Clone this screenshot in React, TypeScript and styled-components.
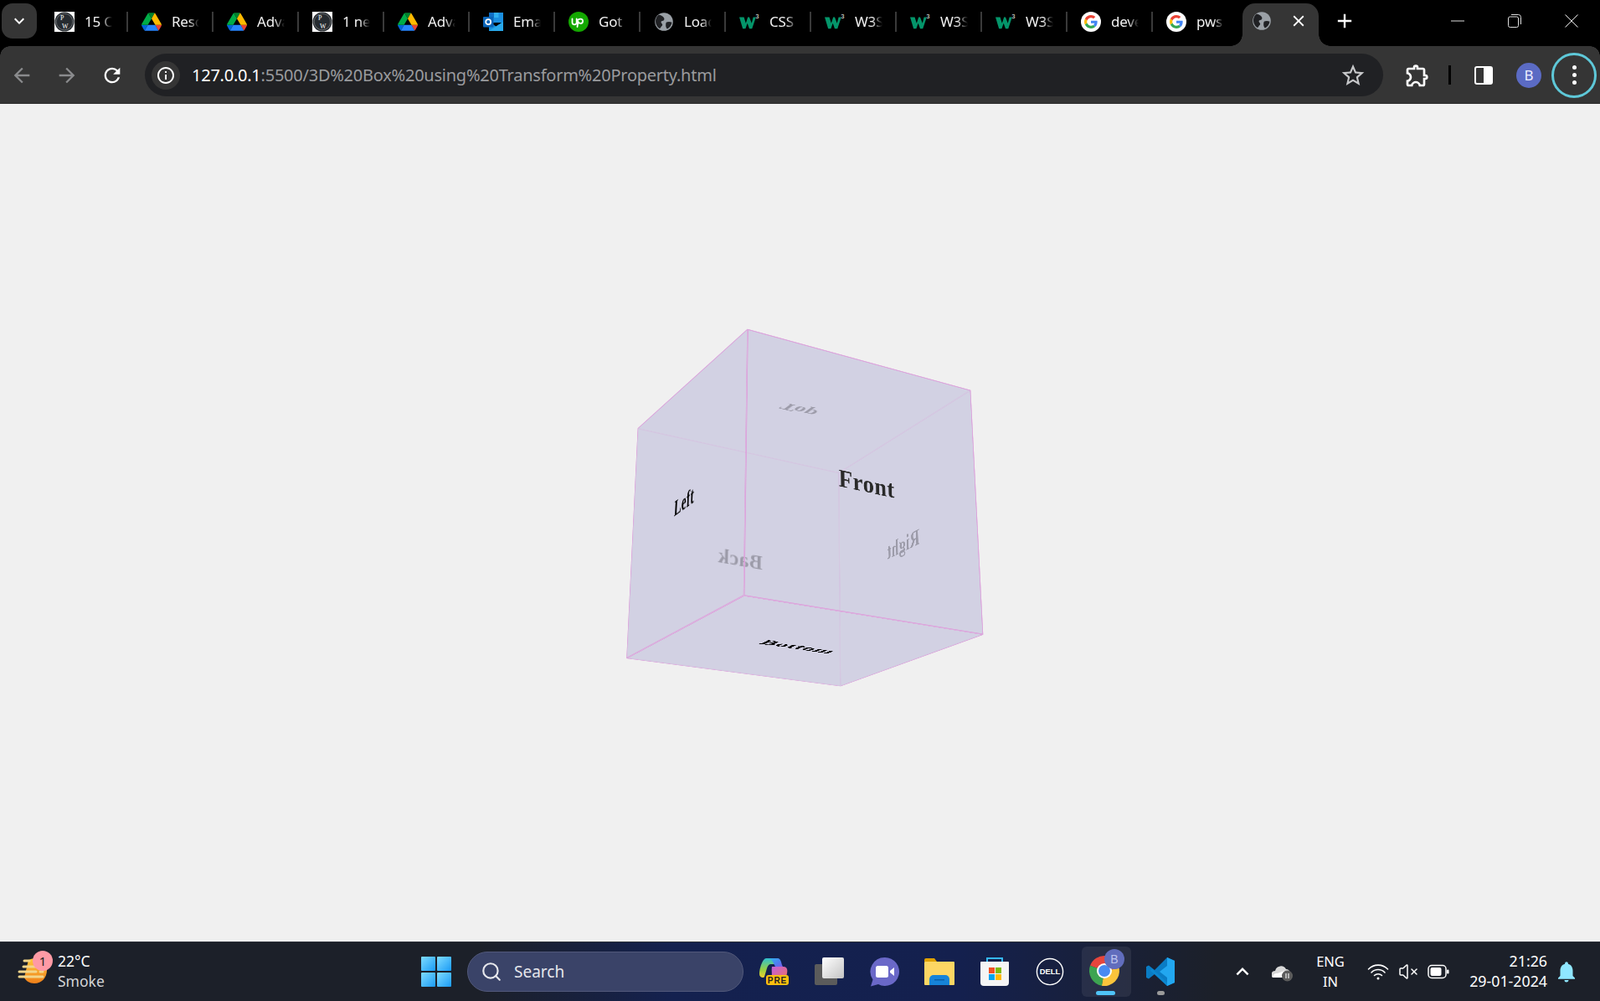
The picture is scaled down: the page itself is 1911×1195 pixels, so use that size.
import React from "react";
import styled, { createGlobalStyle } from "styled-components";
import {
  MdArrowBack,
  MdArrowForward,
  MdRefresh,
  MdInfoOutline,
  MdStarBorder,
  MdOutlineExtension,
  MdNotifications,
  MdClose,
  MdAdd,
  MdKeyboardArrowDown,
  MdKeyboardArrowUp,
} from "react-icons/md";
import { VolumeX, Search as SearchGlyph } from "lucide-react";

const UI_FONT = `"Noto Sans", "Open Sans", "Liberation Sans", sans-serif`;

const GlobalStyle = createGlobalStyle`
  html, body {
    margin: 0;
    padding: 0;
    height: 100%;
    background: #f0f0f0;
    font-family: ${UI_FONT};
    overflow: hidden;
  }
  #root {
    height: 100%;
  }
`;

const Screen = styled.div`
  display: flex;
  flex-direction: column;
  width: 1911px;
  height: 1195px;
  overflow: hidden;
`;

/* ---------- tab strip ---------- */

const TabStrip = styled.div`
  display: flex;
  align-items: flex-start;
  height: 55px;
  flex: none;
  background: #000;
  color: #fff;
`;

const TabSearch = styled.div`
  display: flex;
  align-items: center;
  justify-content: center;
  width: 42px;
  height: 42px;
  margin: 4px 4px 0 2px;
  border-radius: 13px;
  background: #353535;
  font-size: 24px;
`;

const Tab = styled.div<{ $first?: boolean; $last?: boolean }>`
  display: flex;
  align-items: center;
  position: relative;
  width: ${(p) => (p.$first ? 104 : 102)}px;
  height: 51px;
  box-sizing: border-box;
  padding-left: 17px;
  flex: none;

  &::after {
    content: "";
    display: ${(p) => (p.$last ? "none" : "block")};
    position: absolute;
    right: -1px;
    top: 14px;
    width: 2px;
    height: 24px;
    background: #3a3a3a;
  }
`;

const Favicon = styled.span`
  display: flex;
  width: 24px;
  height: 24px;
  flex: none;
  svg {
    display: block;
  }
`;

const TabTitle = styled.span`
  width: 33px;
  margin-left: 12px;
  white-space: nowrap;
  font-size: 17px;
  letter-spacing: -0.2px;
  color: #f1f1f1;
  -webkit-mask-image: linear-gradient(90deg, #000 62%, transparent 100%);
  mask-image: linear-gradient(90deg, #000 62%, transparent 100%);
`;

const ActiveTab = styled.div`
  display: flex;
  align-items: center;
  position: relative;
  flex: none;
  width: 91px;
  height: 51px;
  margin: 4px 5px 0 6px;
  box-sizing: border-box;
  padding: 0 0 9px 11px;
  background: #353535;
  border-radius: 15px 15px 0 0;

  &::before,
  &::after {
    content: "";
    position: absolute;
    bottom: 0;
    width: 14px;
    height: 14px;
  }
  &::before {
    left: -14px;
    background: radial-gradient(circle at 0 0, transparent 13.5px, #353535 14px);
  }
  &::after {
    right: -14px;
    background: radial-gradient(circle at 100% 0, transparent 13.5px, #353535 14px);
  }
`;

const TabClose = styled.span`
  display: flex;
  margin-left: 21px;
  font-size: 22px;
  color: #fff;
`;

const NewTab = styled.div`
  display: flex;
  align-items: center;
  justify-content: center;
  width: 28px;
  height: 50px;
  margin-left: 12px;
  font-size: 28px;
`;

const WindowControls = styled.div`
  display: flex;
  margin-left: auto;
`;

const WindowButton = styled.div`
  display: flex;
  align-items: center;
  justify-content: center;
  width: 68px;
  height: 50px;
`;

/* ---------- toolbar ---------- */

const Toolbar = styled.div`
  display: flex;
  align-items: center;
  height: 69px;
  flex: none;
  box-sizing: border-box;
  padding: 1px 0 0 4px;
  background: #353535;
  color: #fff;
  border-bottom: 1px solid #2c2c2c;
  position: relative;
`;

const Corner = styled.div<{ $side: "left" | "right" }>`
  position: absolute;
  top: 0;
  ${(p) => p.$side}: 0;
  width: 12px;
  height: 12px;
  background: ${(p) =>
    p.$side === "right"
      ? "radial-gradient(circle at 0 100%, transparent 11.5px, #000 12px)"
      : "radial-gradient(circle at 100% 100%, transparent 11.5px, #000 12px)"};
`;

const NavGroup = styled.div`
  display: flex;
  gap: 10px;
  flex: none;
`;

const NavButton = styled.div<{ $dim?: boolean }>`
  display: flex;
  align-items: center;
  justify-content: center;
  width: 44px;
  height: 44px;
  font-size: 28px;
  color: ${(p) => (p.$dim ? "#8a8b8d" : "#fff")};
`;

const Omnibox = styled.div`
  display: flex;
  align-items: center;
  width: 1479px;
  height: 51px;
  margin-left: 17px;
  border-radius: 26px;
  background: #202124;
`;

const InfoChip = styled.div`
  display: flex;
  align-items: center;
  justify-content: center;
  width: 34px;
  height: 34px;
  margin-left: 8px;
  border-radius: 50%;
  background: #353535;
  font-size: 24px;
`;

const Url = styled.div`
  margin-left: 14px;
  font-size: 20px;
  letter-spacing: -0.24px;
  white-space: nowrap;
  color: #9a9b9e;

  b {
    font-weight: 400;
    color: #fff;
  }
`;

const StarSlot = styled.div`
  display: flex;
  margin-left: auto;
  margin-right: 20px;
  font-size: 32px;
  color: #c7c8ca;
`;

const ToolSlot = styled.div<{ $left: number; $width: number }>`
  display: flex;
  align-items: center;
  justify-content: center;
  flex: none;
  width: ${(p) => p.$width}px;
  margin-left: ${(p) => p.$left}px;
  font-size: 32px;
`;

const ToolDivider = styled.div`
  width: 3px;
  height: 23px;
  margin-left: 10px;
  background: #000;
`;

const Avatar = styled.div`
  display: flex;
  align-items: center;
  justify-content: center;
  width: 30px;
  height: 30px;
  margin-left: 17px;
  border-radius: 50%;
  background: #5b6bc4;
  font-size: 17px;
  color: #eef;
`;

const MenuRing = styled.div`
  display: flex;
  flex-direction: column;
  align-items: center;
  justify-content: center;
  gap: 4px;
  width: 54px;
  height: 54px;
  box-sizing: border-box;
  margin-left: 12px;
  border: 3px solid #5ec8d8;
  border-radius: 50%;
`;

const MenuDot = styled.i`
  width: 5px;
  height: 5px;
  border-radius: 50%;
  background: #fff;
`;

/* ---------- page with the cube ---------- */

const Page = styled.main`
  position: relative;
  flex: 1;
  background: #f0f0f0;
`;

const Face = styled.div<{ $ink: string }>`
  position: absolute;
  left: 0;
  top: 0;
  display: flex;
  align-items: center;
  justify-content: center;
  width: 250px;
  height: 250px;
  box-sizing: border-box;
  border: 1px solid #dba6dc;
  background: rgba(208, 207, 225, 0.75);
  font-family: "Liberation Serif", "Times New Roman", serif;
  font-size: 24px;
  font-weight: 700;
  letter-spacing: 0.5px;
  color: ${(p) => p.$ink};
  transform-origin: 0 0;
`;

type Pt = [number, number];

const OFFSET_Y = 124;
const FACE_SIZE = 250;

const A: Pt = [892.7, 392.7];
const B: Pt = [1159.3, 465.7];
const C: Pt = [761.7, 511.3];
const D: Pt = [1002, 564.3];
const E: Pt = [748.3, 786];
const F: Pt = [1004, 819.3];
const G: Pt = [1174.3, 757.7];
const H: Pt = [888.3, 711.3];

// square -> quad, corners given as top-left, top-right, bottom-right, bottom-left
const quadMatrix = (corners: Pt[]) => {
  const [[x0, y0], [x1, y1], [x2, y2], [x3, y3]] = corners.map(
    ([x, y]): Pt => [x, y - OFFSET_Y]
  );
  const dx1 = x1 - x2;
  const dx2 = x3 - x2;
  const dx3 = x0 - x1 + x2 - x3;
  const dy1 = y1 - y2;
  const dy2 = y3 - y2;
  const dy3 = y0 - y1 + y2 - y3;
  const den = dx1 * dy2 - dx2 * dy1;
  const g = (dx3 * dy2 - dx2 * dy3) / den;
  const h = (dx1 * dy3 - dx3 * dy1) / den;
  const a = x1 - x0 + g * x1;
  const b = x3 - x0 + h * x3;
  const d = y1 - y0 + g * y1;
  const e = y3 - y0 + h * y3;
  const s = FACE_SIZE;
  return `matrix3d(${[a / s, d / s, 0, g / s, b / s, e / s, 0, h / s, 0, 0, 1, 0, x0, y0, 0, 1].join(",")})`;
};

// painted back to front, as the faces stack in the picture
const faces: { label: string; ink: string; corners: Pt[] }[] = [
  { label: "Back", ink: "#000", corners: [D, C, E, F] },
  { label: "Right", ink: "#000", corners: [B, D, F, G] },
  { label: "Top", ink: "#000", corners: [C, D, B, A] },
  { label: "Left", ink: "#000", corners: [C, A, H, E] },
  { label: "Bottom", ink: "#000", corners: [H, G, F, E] },
  { label: "Front", ink: "#2a2a2a", corners: [A, B, G, H] },
];

/* ---------- taskbar ---------- */

const Taskbar = styled.footer`
  display: flex;
  align-items: center;
  height: 71px;
  flex: none;
  box-sizing: border-box;
  border-top: 1px solid #2b2f38;
  background: linear-gradient(
    90deg,
    #1c2029 0%,
    #1c2029 30%,
    #14214f 42%,
    #14204e 60%,
    #1c2029 76%,
    #1c2029 100%
  );
  color: #fff;
`;

const Weather = styled.div`
  display: flex;
  align-items: center;
  position: relative;
  width: 503px;
  flex: none;
  box-sizing: border-box;
  padding-left: 21px;
`;

const WeatherBadge = styled.span`
  position: absolute;
  left: 39px;
  top: -2px;
  display: flex;
  align-items: center;
  justify-content: center;
  width: 24px;
  height: 24px;
  border-radius: 50%;
  background: #ff9aa5;
  color: #222;
  font-size: 15px;
`;

const WeatherText = styled.div`
  margin-left: 12px;
  margin-top: -2px;
  font-size: 17.5px;
  line-height: 24px;

  small {
    display: block;
    font-size: 17.5px;
    color: #d4d5d8;
  }
`;

const WinLogo = styled.div`
  display: grid;
  grid-template-columns: 17px 17px;
  grid-template-rows: 17px 17px;
  gap: 1.5px;
  flex: none;
  width: 36px;
`;

const WinPane = styled.i`
  background: linear-gradient(135deg, #7fdcff, #1a9bf5);
  border-radius: 1px;
`;

const SearchPill = styled.div`
  display: flex;
  align-items: center;
  flex: none;
  width: 330px;
  height: 48px;
  box-sizing: border-box;
  margin-left: 19px;
  padding-left: 15px;
  border: 1px solid #51587a;
  border-radius: 24px;
  background: #3a4368;
  color: #e6e7ec;
  font-size: 19px;

  span {
    margin-left: 14px;
  }
`;

const Dock = styled.div`
  display: flex;
  flex: none;
  margin-left: 3px;
`;

const DockSlot = styled.div<{ $active?: boolean }>`
  display: flex;
  align-items: center;
  justify-content: center;
  position: relative;
  width: 66px;
  height: 60px;
  flex: none;

  ${(p) =>
    p.$active &&
    `
    &::before {
      content: "";
      position: absolute;
      left: 5px;
      right: 2px;
      top: 0;
      bottom: 0;
      border-radius: 6px;
      background: rgba(255, 255, 255, 0.07);
    }
  `}
`;

const DockMark = styled.i<{ $width: number; $color: string }>`
  position: absolute;
  bottom: 2px;
  left: 50%;
  width: ${(p) => p.$width}px;
  height: 5px;
  margin-left: ${(p) => -p.$width / 2}px;
  border-radius: 3px;
  background: ${(p) => p.$color};
`;

const Tray = styled.div`
  display: flex;
  align-items: center;
  margin-left: 41px;
`;

const TraySlot = styled.div<{ $width: number }>`
  display: flex;
  align-items: center;
  justify-content: center;
  flex: none;
  width: ${(p) => p.$width}px;
  font-size: 30px;
`;

const Lang = styled.div`
  text-align: center;
  font-size: 16.5px;
  line-height: 24px;
`;

const Clock = styled.div`
  width: 106px;
  flex: none;
  margin-top: -2px;
  text-align: right;
  font-size: 17.8px;
  line-height: 24px;
  white-space: nowrap;
`;

/* ---------- icons ---------- */

const PwIcon = () => (
  <svg viewBox="0 0 24 24" width="24" height="24">
    <rect width="24" height="24" fill="#fff" />
    <circle cx="12" cy="12" r="11.5" fill="#262b30" />
    <circle cx="12" cy="12" r="9.8" fill="none" stroke="#aaa" strokeWidth=".5" />
    <text x="7" y="10" fontSize="8" fontFamily="Liberation Serif" fill="#fff">P</text>
    <text x="9" y="20" fontSize="8" fontFamily="Liberation Serif" fill="#fff">W</text>
  </svg>
);

const DriveIcon = () => (
  <svg viewBox="0 0 87.3 78" width="24" height="24">
    <path d="m6.6 66.85 3.85 6.65c.8 1.4 1.95 2.5 3.3 3.3l13.75-23.8h-27.5c0 1.55.4 3.1 1.2 4.5z" fill="#0066da" />
    <path d="m43.65 25-13.75-23.8c-1.35.8-2.5 1.9-3.3 3.3l-25.4 44a9.06 9.06 0 0 0 -1.2 4.5h27.5z" fill="#00ac47" />
    <path d="m73.55 76.8c1.35-.8 2.5-1.9 3.3-3.3l1.6-2.75 7.65-13.25c.8-1.4 1.2-2.95 1.2-4.5h-27.502l5.852 11.5z" fill="#ea4335" />
    <path d="m43.65 25 13.75-23.8c-1.35-.8-2.9-1.2-4.5-1.2h-18.5c-1.6 0-3.15.45-4.5 1.2z" fill="#00832d" />
    <path d="m59.8 53h-32.3l-13.75 23.8c1.35.8 2.9 1.2 4.5 1.2h50.8c1.6 0 3.15-.45 4.5-1.2z" fill="#2684fc" />
    <path d="m73.4 26.5-12.7-22c-.8-1.4-1.95-2.5-3.3-3.3l-13.75 23.8 16.15 28h27.45c0-1.55-.4-3.1-1.2-4.5z" fill="#ffba00" />
  </svg>
);

const OutlookIcon = () => (
  <svg viewBox="0 0 24 24" width="24" height="24">
    <rect x="7" y="1" width="17" height="12" fill="#1a8fe0" />
    <rect x="12.5" y="1" width="6" height="6" fill="#30b0f0" />
    <rect x="7" y="1" width="6" height="6" fill="#0f6fc6" />
    <path d="M7 12l8.5 5.5L24 12v11H7z" fill="#1490df" />
    <path d="M7 23l17-11v11z" fill="#28a8ea" />
    <rect x="0" y="6" width="12.5" height="12.5" rx="1" fill="#0a64b8" />
    <circle cx="6.2" cy="12.2" r="3" fill="none" stroke="#fff" strokeWidth="1.7" />
  </svg>
);

const UpworkIcon = () => (
  <svg viewBox="0 0 24 24" width="24" height="24">
    <circle cx="12" cy="12" r="12" fill="#14a800" />
    <path
      d="M4.5 8.500v4.200a2.600 2.600 0 0 0 5.200 0V8.500M9.800 12.400c.5-2.400 2.300-3.800 4.600-3.800a2.700 2.700 0 0 1 0 5.400c-1.300 0-2.300-.8-2.900-2l-1 6"
      fill="none"
      stroke="#fff"
      strokeWidth="1.800"
      strokeLinecap="round"
    />
  </svg>
);

const GlobeIcon = () => (
  <svg viewBox="0 0 24 24" width="24" height="24">
    <circle cx="12" cy="12" r="10.8" fill="#9aa0a6" />
    <path d="M5.5 3.800c3 .2 5.500 1.600 6.600 3.600 1 1.900-.4 3.300-2.300 3.600-1.700.3-1.500 2.300-.3 3.200 1.300 1 .5 2.800-.6 3.400-.8 1.500-1.300 2.400-2 2.500-3.500-2-5.200-6-4.800-10 .3-2.500 1.600-4.700 3.400-6.300z" fill="#202124" />
    <path d="M15 12.500c2-.9 4.800-.7 6.500.3-.5 3.500-2.700 6.300-5.600 7.800-1.300-1.500-1.900-3.300-1.700-4.800.1-1.300 0-2.600.8-3.300z" fill="#202124" />
  </svg>
);

const W3Icon = () => (
  <svg viewBox="0 0 26 24" width="24" height="24">
    <path d="M0 6h6l2.500 8 2.500-8h2l3 8 2-8h3.500l-5 15h-3.500l-2.500-7-2.500 7h-3.500z" fill="#04956a" />
    <text x="21" y="8" fontSize="7.500" fill="#fff" fontFamily="Liberation Sans">3</text>
  </svg>
);

const GoogleIcon = () => (
  <svg viewBox="0 0 24 24" width="24" height="24">
    <circle cx="12" cy="12" r="12" fill="#fff" />
    <g transform="translate(4 4) scale(.3333)">
      <path fill="#EA4335" d="M24 9.5c3.54 0 6.71 1.22 9.21 3.6l6.85-6.85C35.9 2.38 30.47 0 24 0 14.62 0 6.51 5.38 2.56 13.22l7.98 6.19C12.43 13.72 17.74 9.5 24 9.5z" />
      <path fill="#4285F4" d="M46.98 24.55c0-1.57-.15-3.09-.38-4.55H24v9.02h12.94c-.58 2.96-2.26 5.48-4.78 7.18l7.73 6c4.51-4.18 7.09-10.36 7.09-17.65z" />
      <path fill="#FBBC05" d="M10.53 28.59c-.48-1.45-.76-2.99-.76-4.59s.27-3.14.76-4.59l-7.98-6.19C.92 16.46 0 20.12 0 24c0 3.88.92 7.54 2.56 10.78l7.97-6.19z" />
      <path fill="#34A853" d="M24 48c6.48 0 11.93-2.13 15.89-5.81l-7.73-6c-2.15 1.45-4.92 2.3-8.16 2.3-6.26 0-11.57-4.22-13.47-9.91l-7.98 6.19C6.51 42.62 14.62 48 24 48z" />
    </g>
  </svg>
);

const icons: Record<string, () => React.JSX.Element> = {
  pw: PwIcon,
  drive: DriveIcon,
  outlook: OutlookIcon,
  upwork: UpworkIcon,
  globe: GlobeIcon,
  w3: W3Icon,
  google: GoogleIcon,
};

const tabs = [
  { icon: "pw", title: "15 C" },
  { icon: "drive", title: "Resc" },
  { icon: "drive", title: "Adva" },
  { icon: "pw", title: "1 ne" },
  { icon: "drive", title: "Adva" },
  { icon: "outlook", title: "Ema" },
  { icon: "upwork", title: "Got" },
  { icon: "globe", title: "Load" },
  { icon: "w3", title: "CSS" },
  { icon: "w3", title: "W3S" },
  { icon: "w3", title: "W3S" },
  { icon: "w3", title: "W3S" },
  { icon: "google", title: "deve" },
  { icon: "google", title: "pws" },
];

const SidePanelIcon = () => (
  <svg viewBox="0 0 22 22" width="22" height="22">
    <rect x="1" y="1" width="20" height="20" rx="2" fill="none" stroke="#fff" strokeWidth="2" />
    <rect x="11" y="1" width="10" height="20" rx="1" fill="#fff" />
  </svg>
);

const WeatherIcon = () => (
  <svg viewBox="0 0 36 36" width="36" height="36">
    <path d="M13 4a15 15 0 0 1 22 12c0 9-6 16-15 16-6 0-10-3-12-7z" fill="url(#sun)" />
    <defs>
      <linearGradient id="sun" x1="0" y1="0" x2="0" y2="1">
        <stop offset="0" stopColor="#ffc83d" />
        <stop offset="1" stopColor="#f0801a" />
      </linearGradient>
    </defs>
    <g stroke="#f2d58a" strokeWidth="3" strokeLinecap="round">
      <path d="M8 5h6M7 12h14M2 18h20M27 18h3M2 24h28" />
    </g>
  </svg>
);

const CopilotIcon = () => (
  <svg viewBox="0 0 36 36" width="36" height="36">
    <defs>
      <linearGradient id="cpA" x1="0" y1="0" x2="1" y2="1">
        <stop offset="0" stopColor="#2fb5f0" />
        <stop offset=".6" stopColor="#4f7df0" />
        <stop offset="1" stopColor="#7b5ce8" />
      </linearGradient>
      <linearGradient id="cpB" x1="0" y1="0" x2="0" y2="1">
        <stop offset="0" stopColor="#2fc0d0" />
        <stop offset=".6" stopColor="#9ad040" />
        <stop offset="1" stopColor="#f0d030" />
      </linearGradient>
      <linearGradient id="cpC" x1="0" y1="0" x2="1" y2="1">
        <stop offset="0" stopColor="#c060e0" />
        <stop offset="1" stopColor="#f07060" />
      </linearGradient>
    </defs>
    <path d="M9 2h12c4 0 5 3 6 7H15c-3 0-4 2-5 5L7 24c-1 2-6 1-6-3C1 14 5 2 9 2z" fill="url(#cpB)" />
    <path d="M12 2h11c3 0 4 4 5 8l1 2h-9c-3-6-4-9-8-10z" fill="url(#cpA)" />
    <path d="M16 12h14c4 0 5 4 4 8-1 5-3 8-7 8H15c2-4 0-12 1-16z" fill="url(#cpC)" />
    <rect x="9" y="22" width="27" height="12" rx="3" fill="#fbbf0e" />
    <text x="22.5" y="32" textAnchor="middle" fontSize="10" fontWeight="700" fill="#222" fontFamily="Liberation Sans" letterSpacing="1">PRE</text>
  </svg>
);

const TaskViewIcon = () => (
  <svg viewBox="0 0 36 36" width="36" height="36">
    <rect x="1" y="9" width="27" height="25" rx="2" fill="#5b5b5b" />
    <rect x="10" y="1" width="26" height="25" rx="2" fill="url(#tv)" />
    <defs>
      <linearGradient id="tv" x1="0" y1="0" x2="1" y2="1">
        <stop offset="0" stopColor="#ffffff" />
        <stop offset="1" stopColor="#c4c4c4" />
      </linearGradient>
    </defs>
  </svg>
);

const MeetIcon = () => (
  <svg viewBox="0 0 36 36" width="36" height="36">
    <path d="M19 1a17 17 0 1 1-8 32L2 35.500l2.500-8A17 17 0 0 1 19 1z" fill="#6a68c8" />
    <rect x="8" y="11" width="15" height="14" rx="2.500" fill="#fff" />
    <path d="M25 17l5-4v10l-5-4z" fill="#fff" />
  </svg>
);

const FolderIcon = () => (
  <svg viewBox="0 0 36 32" width="36" height="32">
    <path d="M0 2a2 2 0 0 1 2-2h10l3 4h-15z" fill="#e0a100" />
    <rect x="0" y="4" width="36" height="28" rx="1" fill="#fdd663" />
    <path d="M6 32v-7a5 5 0 0 1 5-5h14a5 5 0 0 1 5 5v7z" fill="#1683d8" />
    <rect x="12" y="25" width="12" height="1.500" fill="#0a5fa8" />
  </svg>
);

const StoreIcon = () => (
  <svg viewBox="0 0 36 36" width="36" height="36">
    <path d="M9 7V2h18v5" fill="none" stroke="#35b8f0" strokeWidth="2" />
    <path d="M2 6h32a1 1 0 0 1 1 1v24a4 4 0 0 1-4 4H5a4 4 0 0 1-4-4V7a1 1 0 0 1 1-1z" fill="#f5f5f5" />
    <rect x="11" y="13" width="7" height="7" fill="#f25022" />
    <rect x="19" y="13" width="7" height="7" fill="#7fba00" />
    <rect x="11" y="21" width="7" height="7" fill="#00a4ef" />
    <rect x="19" y="21" width="7" height="7" fill="#ffb900" />
  </svg>
);

const DellIcon = () => (
  <svg viewBox="0 0 36 36" width="34" height="34">
    <circle cx="18" cy="18" r="16.500" fill="none" stroke="#fff" strokeWidth="1.500" />
    <text x="18" y="21.500" textAnchor="middle" fontSize="10" fontWeight="700" fill="#fff" fontFamily="Liberation Sans">DELL</text>
  </svg>
);

const sector = (from: number, to: number, r = 18, c = 18) => {
  const p = (deg: number) => {
    const t = (deg * Math.PI) / 180;
    return `${c + r * Math.cos(t)} ${c + r * Math.sin(t)}`;
  };
  return `M${c} ${c}L${p(from)}A${r} ${r} 0 0 1 ${p(to)}Z`;
};

const ChromeIcon = () => (
  <svg viewBox="0 0 46 56" width="46" height="56">
    <g transform="translate(4 9)">
      <path d={sector(-160, -10)} fill="#e5392f" />
      <path d={sector(-10, 100)} fill="#fbc02d" />
      <path d={sector(100, 200)} fill="#2f9e44" />
      <circle cx="18" cy="18" r="9" fill="#fff" />
      <circle cx="18" cy="18" r="7" fill="#3b82f0" />
    </g>
    <circle cx="34" cy="13" r="12" fill="#5562b8" />
    <text x="34" y="18" textAnchor="middle" fontSize="14" fill="#b9c0ee" fontFamily="Liberation Sans">B</text>
  </svg>
);

const VsCodeIcon = () => (
  <svg viewBox="0 0 36 36" width="36" height="36">
    <path d="M26 1l9 4v26l-9 4-15-14-7 5.500-3-1.500v-13l3-1.500 7 5.500z" fill="#0a7cc4" />
    <path d="M26 1l9 4v26l-9 4V25l-9-7 9-7z" fill="#22a7f0" />
    <path d="M4 11l22 20v4l-22-20z" fill="#0e8fd8" opacity=".6" />
    <path d="M1 12.500l3-1.500 4 3.500-4 3.500-3 1z" fill="#0a7cc4" />
  </svg>
);

const CloudIcon = () => (
  <svg viewBox="0 0 26 24" width="26" height="24">
    <path d="M1 19a4.500 4.500 0 0 1 3-8 7 7 0 0 1 13-2 5 5 0 0 1 5 5v5z" fill="#d8d8d8" />
    <path d="M1 19a5 5 0 0 1 6-5l8-3 3 8z" fill="#fff" />
    <circle cx="18.500" cy="17" r="6.500" fill="#5c5c5c" />
    <path d="M17 14v6M20 14v6" stroke="#eee" strokeWidth="1.200" />
  </svg>
);

const WifiIcon = () => (
  <svg viewBox="0 0 26 20" width="26" height="20" fill="none" stroke="#fff" strokeWidth="1.600" strokeLinecap="round">
    <path d="M1.500 7a16 16 0 0 1 23 0M5 11a11 11 0 0 1 16 0M8.500 14.500a6.500 6.500 0 0 1 9 0" />
    <circle cx="13" cy="18" r="1.500" fill="#fff" stroke="none" />
  </svg>
);

const BatteryIcon = () => (
  <svg viewBox="0 0 26 18" width="26" height="18">
    <rect x="1" y="1.500" width="21" height="15" rx="4" fill="none" stroke="#fff" strokeWidth="1.500" />
    <rect x="3.500" y="4" width="13" height="10" rx="2" fill="#fff" />
    <rect x="23" y="6.500" width="2.500" height="5" rx="1.200" fill="#fff" />
  </svg>
);

const App = () => (
  <Screen>
    <GlobalStyle />
    <TabStrip>
      <TabSearch>
        <MdKeyboardArrowDown />
      </TabSearch>
      {tabs.map((tab, i) => {
        const Icon = icons[tab.icon];
        return (
          <Tab key={i} $first={i === 0} $last={i === tabs.length - 1}>
            <Favicon>
              <Icon />
            </Favicon>
            <TabTitle>{tab.title}</TabTitle>
          </Tab>
        );
      })}
      <ActiveTab>
        <Favicon>
          <GlobeIcon />
        </Favicon>
        <TabClose>
          <MdClose />
        </TabClose>
      </ActiveTab>
      <NewTab>
        <MdAdd />
      </NewTab>
      <WindowControls>
        <WindowButton>
          <svg width="16" height="16" viewBox="0 0 16 16">
            <path d="M0 8h16" stroke="#ddd" strokeWidth="1" />
          </svg>
        </WindowButton>
        <WindowButton>
          <svg width="16" height="16" viewBox="0 0 16 16" fill="none" stroke="#ddd" strokeWidth="1">
            <rect x=".5" y="3" width="12" height="12.500" rx="2" />
            <path d="M4 .5h8.500a3 3 0 0 1 3 3v8.500" />
          </svg>
        </WindowButton>
        <WindowButton>
          <svg width="16" height="16" viewBox="0 0 16 16">
            <path d="M.5.500l15 15M15.500.500l-15 15" stroke="#eee" strokeWidth="1" />
          </svg>
        </WindowButton>
      </WindowControls>
    </TabStrip>

    <Toolbar>
      <Corner $side="left" />
      <Corner $side="right" />
      <NavGroup>
        <NavButton $dim>
          <MdArrowBack />
        </NavButton>
        <NavButton $dim>
          <MdArrowForward />
        </NavButton>
        <NavButton>
          <MdRefresh />
        </NavButton>
      </NavGroup>
      <Omnibox>
        <InfoChip>
          <MdInfoOutline />
        </InfoChip>
        <Url>
          <b>127.0.0.1</b>:5500/3D%20Box%20using%20Transform%20Property.html
        </Url>
        <StarSlot>
          <MdStarBorder />
        </StarSlot>
      </Omnibox>
      <ToolSlot $left={14} $width={54}>
        <MdOutlineExtension />
      </ToolSlot>
      <ToolDivider />
      <ToolSlot $left={17} $width={44}>
        <SidePanelIcon />
      </ToolSlot>
      <Avatar>B</Avatar>
      <MenuRing>
        <MenuDot />
        <MenuDot />
        <MenuDot />
      </MenuRing>
    </Toolbar>

    <Page>
      {faces.map((face) => (
        <Face key={face.label} $ink={face.ink} style={{ transform: quadMatrix(face.corners) }}>
          {face.label}
        </Face>
      ))}
    </Page>

    <Taskbar>
      <Weather>
        <WeatherBadge>1</WeatherBadge>
        <WeatherIcon />
        <WeatherText>
          22°C
          <small>Smoke</small>
        </WeatherText>
      </Weather>
      <WinLogo>
        <WinPane />
        <WinPane />
        <WinPane />
        <WinPane />
      </WinLogo>
      <SearchPill>
        <SearchGlyph size={26} strokeWidth={2} />
        <span>Search</span>
      </SearchPill>
      <Dock>
        <DockSlot>
          <CopilotIcon />
        </DockSlot>
        <DockSlot>
          <TaskViewIcon />
        </DockSlot>
        <DockSlot>
          <MeetIcon />
        </DockSlot>
        <DockSlot>
          <FolderIcon />
        </DockSlot>
        <DockSlot>
          <StoreIcon />
        </DockSlot>
        <DockSlot>
          <DellIcon />
        </DockSlot>
        <DockSlot $active>
          <ChromeIcon />
          <DockMark $width={23} $color="#4fc3f7" />
        </DockSlot>
        <DockSlot>
          <VsCodeIcon />
          <DockMark $width={9} $color="#9a9a9a" />
        </DockSlot>
      </Dock>
      <Tray>
        <TraySlot $width={48}>
          <MdKeyboardArrowUp />
        </TraySlot>
        <TraySlot $width={48}>
          <CloudIcon />
        </TraySlot>
        <TraySlot $width={66}>
          <Lang>
            ENG
            <br />
            IN
          </Lang>
        </TraySlot>
        <TraySlot $width={48}>
          <WifiIcon />
        </TraySlot>
        <TraySlot $width={24}>
          <VolumeX size={24} strokeWidth={1.5} />
        </TraySlot>
        <TraySlot $width={48}>
          <BatteryIcon />
        </TraySlot>
        <Clock>
          21:26
          <br />
          29-01-2024
        </Clock>
        <TraySlot $width={46}>
          <MdNotifications color="#8fe6ff" />
        </TraySlot>
      </Tray>
    </Taskbar>
  </Screen>
);

export default App;
